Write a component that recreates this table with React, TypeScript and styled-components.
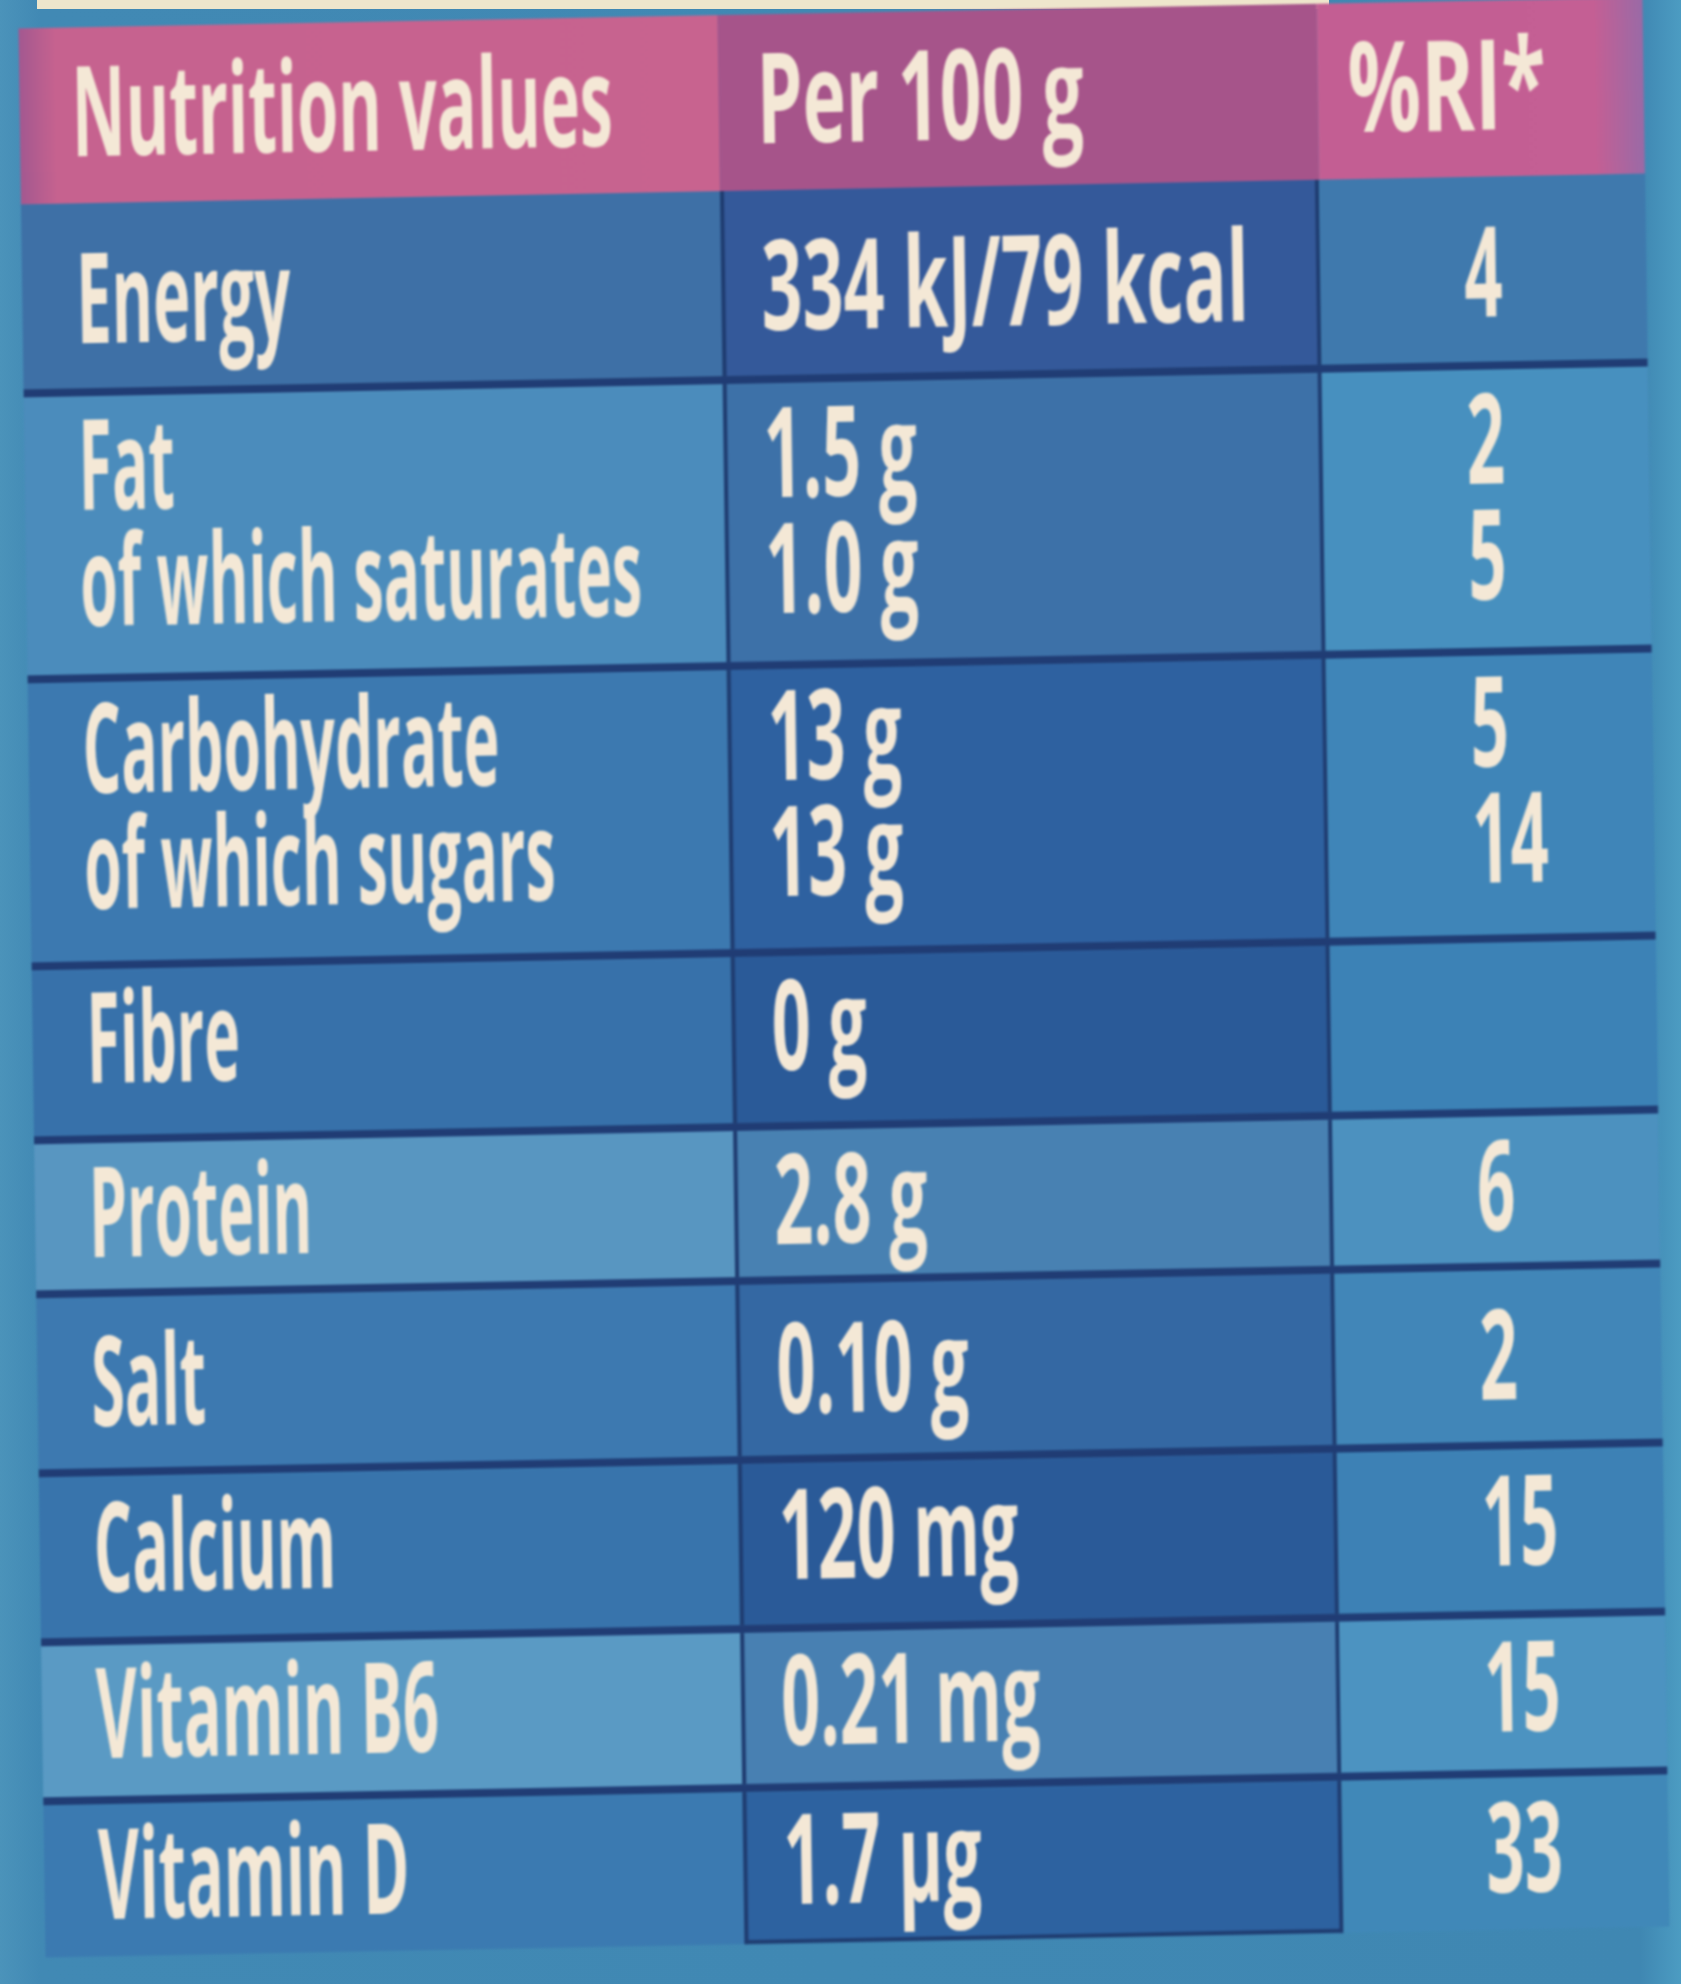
import React from 'react';
import styled, { createGlobalStyle, css } from 'styled-components';

const Global = createGlobalStyle`
  html, body { margin: 0; padding: 0; }
  body {
    width: 1681px;
    height: 1984px;
    overflow: hidden;
    background: #4189b4;
    font-family: "Open Sans", "DejaVu Sans", sans-serif;
  }
`;

const Page = styled.div`
  width: 1681px;
  height: 1984px;
  display: flex;
  flex-direction: column;
  background: linear-gradient(to right, #4b93ba 0, #4189b4 40px, #3f87b2 1640px, #4c9cc2 1681px);
`;

const CreamStrip = styled.div`
  flex: none;
  margin-left: 37px;
  width: 1292px;
  height: 9px;
  background: #eee6cc;
`;

const Table = styled.div`
  flex: none;
  margin: 4px 0 0 32px;
  width: 1624px;
  display: flex;
  flex-direction: column;
  transform: matrix(1, -0.019, 0.014, 1, 0, 0);
  transform-origin: 50% 50%;
  filter: blur(1.3px);
`;

const Row = styled.div<{ $h: number; $line?: boolean }>`
  display: grid;
  grid-template-columns: 699px 599px 1fr;
  height: ${(p) => p.$h}px;
  box-sizing: border-box;
  border-top: ${(p) => (p.$line ? '8px solid #203c74' : '0')};
`;

const Cell = styled.div<{ $bg: string; $pad: number; $lift: number; $box?: boolean; $last?: boolean }>`
  background: ${(p) => p.$bg};
  display: flex;
  flex-direction: column;
  justify-content: center;
  box-sizing: border-box;
  min-width: 0;
  padding-left: ${(p) => p.$pad}px;
  padding-bottom: ${(p) => p.$lift}px;
  ${(p) =>
    p.$box &&
    css`
      border-left: 4px solid #1f3c70;
      border-right: 4px solid #1f3c70;
    `}
  ${(p) => p.$last && 'border-bottom: 4px solid #1f3c70;'}
`;

const HeadCell = styled.div<{ $bg: string; $pad: number }>`
  background: ${(p) => p.$bg};
  display: flex;
  flex-direction: column;
  justify-content: center;
  box-sizing: border-box;
  min-width: 0;
  padding-left: ${(p) => p.$pad}px;
  padding-bottom: 17px;
`;

const Txt = styled.span<{ $sx: number }>`
  display: block;
  height: 116px;
  white-space: nowrap;
  font-size: 126px;
  line-height: 116px;
  font-weight: 700;
  color: #f4e8d6;
  transform: scaleX(${(p) => p.$sx});
  transform-origin: 0 50%;
`;

type RowData = {
  h: number;
  lift: number;
  label: string[];
  value: string[];
  ri: string[];
  bg: [string, string, string];
  lsx?: number;
  vsx?: number;
};

const LABEL_SX = 0.48;
const VALUE_SX = 0.54;
const RI_SX = 0.53;

const rows: RowData[] = [
  { h: 185, lift: 4, label: ['Energy'], value: ['334 kJ/79 kcal'], ri: ['4'], bg: ['#3e70a6', '#34599a', '#3f79ad'], vsx: 0.57, lsx: 0.5 },
  { h: 286, lift: 32, label: ['Fat', 'of which saturates'], value: ['1.5 g', '1.0 g'], ri: ['2', '5'], bg: ['#4b8cbc', '#3d71a8', '#4790bf'] },
  { h: 287, lift: 40, label: ['Carbohydrate', 'of which sugars'], value: ['13 g', '13 g'], ri: ['5', '14'], bg: ['#3c79b0', '#2e61a0', '#3f85b8'] },
  { h: 174, lift: 36, label: ['Fibre'], value: ['0 g'], ri: [], bg: ['#3771aa', '#2a5a98', '#3c82b6'] },
  { h: 154, lift: 16, label: ['Protein'], value: ['2.8 g'], ri: ['6'], bg: ['#5896c1', '#4881b2', '#4c91bf'] },
  { h: 179, lift: 11, label: ['Salt'], value: ['0.10 g'], ri: ['2'], bg: ['#3d79b0', '#3468a3', '#4186b8'] },
  { h: 169, lift: 27, label: ['Calcium'], value: ['120 mg'], ri: ['15'], bg: ['#3874ac', '#2a5a98', '#3d81b5'] },
  { h: 159, lift: 24, label: ['Vitamin B6'], value: ['0.21 mg'], ri: ['15'], bg: ['#5a9ac4', '#4880b2', '#4c93c1'], lsx: 0.5 },
  { h: 160, lift: 20, label: ['Vitamin D'], value: ['1.7 µg'], ri: ['33'], bg: ['#3b7ab1', '#2d62a0', '#4088b8'], lsx: 0.5 },
];

const Lines = ({ items, sx }: { items: string[]; sx: number }) => (
  <>
    {items.map((t, i) => (
      <Txt key={i} $sx={sx}>
        {t}
      </Txt>
    ))}
  </>
);

export default function App() {
  return (
    <>
      <Global />
      <Page>
        <CreamStrip />
        <Table>
          <Row $h={176}>
            <HeadCell $bg="linear-gradient(to right, #a35890 0, #c6628f 36px, #c8638f 100%)" $pad={52}>
              <Txt $sx={0.526}>Nutrition values</Txt>
            </HeadCell>
            <HeadCell $bg="#a6548a" $pad={38}>
              <Txt $sx={0.58}>Per 100 g</Txt>
            </HeadCell>
            <HeadCell $bg="linear-gradient(to right, #c35e93 0, #c45f94 85%, #9a6aa6 100%)" $pad={30}>
              <Txt $sx={0.645}>%RI*</Txt>
            </HeadCell>
          </Row>
          {rows.map((r, i) => (
            <Row key={i} $h={r.h} $line={i > 0}>
              <Cell $bg={r.bg[0]} $pad={54} $lift={r.lift}>
                <Lines items={r.label} sx={r.lsx ?? LABEL_SX} />
              </Cell>
              <Cell $bg={r.bg[1]} $pad={36} $lift={r.lift} $box $last={i === rows.length - 1}>
                <Lines items={r.value} sx={r.vsx ?? VALUE_SX} />
              </Cell>
              <Cell $bg={r.bg[2]} $pad={144} $lift={r.lift}>
                <Lines items={r.ri} sx={RI_SX} />
              </Cell>
            </Row>
          ))}
        </Table>
      </Page>
    </>
  );
}
